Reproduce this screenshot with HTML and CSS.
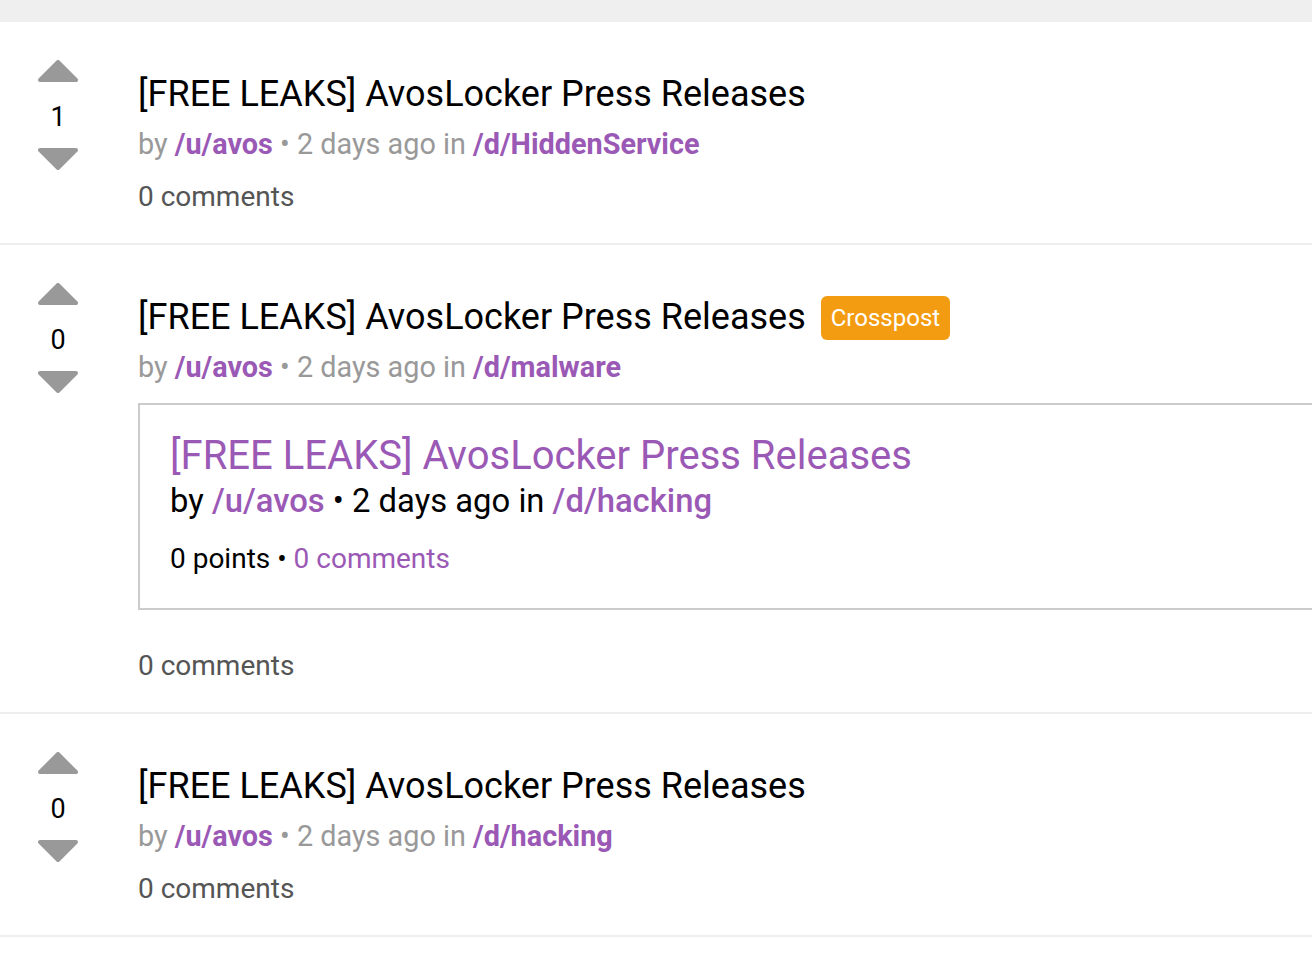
FILE: index.html
```html
<!DOCTYPE html>
<html lang="en">
<head>
  <meta charset="UTF-8" />
  <meta name="viewport" content="width=device-width, initial-scale=1" />
  <title>Posts</title>
  <link rel="stylesheet" href="styles.css">
</head>
<body>
  <div class="topbar"></div>

  <div class="feed">
    <div class="post">
      <div class="vote">
        <svg class="arrow" width="40" height="22" viewBox="0 0 40 22"><polygon points="20,2 38,20 2,20" /></svg>
        <div class="score">1</div>
        <svg class="arrow" width="40" height="22" viewBox="0 0 40 22"><polygon points="2,2 38,2 20,20" /></svg>
      </div>
      <div class="content">
        <div class="title-row">
          <a class="title" href="#">[FREE LEAKS] AvosLocker Press Releases</a>
        </div>
        <div class="meta">by <a href="#">/u/avos</a> &bull; 2 days ago in <a href="#">/d/HiddenService</a></div>
        <div class="comments"><a href="#">0 comments</a></div>
      </div>
    </div>

    <div class="post">
      <div class="vote">
        <svg class="arrow" width="40" height="22" viewBox="0 0 40 22"><polygon points="20,2 38,20 2,20" /></svg>
        <div class="score">0</div>
        <svg class="arrow" width="40" height="22" viewBox="0 0 40 22"><polygon points="2,2 38,2 20,20" /></svg>
      </div>
      <div class="content">
        <div class="title-row">
          <a class="title" href="#">[FREE LEAKS] AvosLocker Press Releases</a>
          <span class="badge">Crosspost</span>
        </div>
        <div class="meta">by <a href="#">/u/avos</a> &bull; 2 days ago in <a href="#">/d/malware</a></div>

        <div class="crosspost">
          <a class="cp-title" href="#">[FREE LEAKS] AvosLocker Press Releases</a>
          <div class="cp-meta">by <a href="#">/u/avos</a> &bull; 2 days ago in <a href="#">/d/hacking</a></div>
          <div class="cp-stats">0 points &bull; <a href="#">0 comments</a></div>
        </div>

        <div class="comments spaced"><a href="#">0 comments</a></div>
      </div>
    </div>

    <div class="post">
      <div class="vote">
        <svg class="arrow" width="40" height="22" viewBox="0 0 40 22"><polygon points="20,2 38,20 2,20" /></svg>
        <div class="score">0</div>
        <svg class="arrow" width="40" height="22" viewBox="0 0 40 22"><polygon points="2,2 38,2 20,20" /></svg>
      </div>
      <div class="content">
        <div class="title-row">
          <a class="title" href="#">[FREE LEAKS] AvosLocker Press Releases</a>
        </div>
        <div class="meta">by <a href="#">/u/avos</a> &bull; 2 days ago in <a href="#">/d/hacking</a></div>
        <div class="comments"><a href="#">0 comments</a></div>
      </div>
    </div>
  </div>
</body>
</html>
```

FILE: styles.css
```css
html, body {
  margin: 0;
  padding: 0;
  font-family: Roboto, "Liberation Sans", Arial, sans-serif;
  background-color: #fff;
  overflow-x: hidden;
}

a {
  text-decoration: none;
}

.topbar {
  height: 22px;
  background-color: #efefef;
}

/* wider than the window, the crosspost box runs off the right edge */
.feed {
  width: 1400px;
}

.post {
  display: flex;
  border-bottom: 2px solid #eee;
  padding-bottom: 28px;
}

.vote {
  width: 116px;
  flex-shrink: 0;
  padding-top: 38px;
  display: flex;
  flex-direction: column;
  align-items: center;
}

.arrow {
  display: block;
}

.arrow polygon {
  fill: #999;
  stroke: #999;
  stroke-width: 4;
  stroke-linejoin: round;
}

.score {
  height: 66px;
  line-height: 70px;
  font-size: 27px;
  color: #000;
}

.content {
  flex: 1;
  padding-left: 22px;
  padding-top: 50px;
}

.title-row {
  display: flex;
  align-items: center;
  height: 44px;
}

.title {
  font-size: 36px;
  line-height: 44px;
  color: #000;
}

.badge {
  margin-left: 15px;
  margin-top: 2px;
  background-color: #f39c12;
  color: #fff;
  font-size: 24px;
  line-height: 44px;
  padding: 0 10px;
  border-radius: 6px;
}

.meta {
  margin-top: 10px;
  font-size: 28.8px;
  line-height: 36px;
  color: #999;
}

.meta a {
  color: #9b59b6;
  font-weight: bold;
}

.comments {
  margin-top: 17px;
  font-size: 28px;
  line-height: 36px;
}

.comments a {
  color: #555;
}

.comments.spaced {
  margin-top: 38px;
}

.crosspost {
  margin-top: 18px;
  border: 2px solid #ccc;
  padding: 26px 30px 29px;
}

.cp-title {
  display: block;
  font-size: 40px;
  line-height: 50px;
  color: #9b59b6;
}

.cp-meta {
  font-size: 32.8px;
  line-height: 40px;
  color: #000;
}

.cp-meta a {
  color: #9b59b6;
  font-weight: 500;
}

.cp-stats {
  margin-top: 18px;
  font-size: 28px;
  line-height: 40px;
  color: #000;
}

.cp-stats a {
  color: #9b59b6;
}
```
